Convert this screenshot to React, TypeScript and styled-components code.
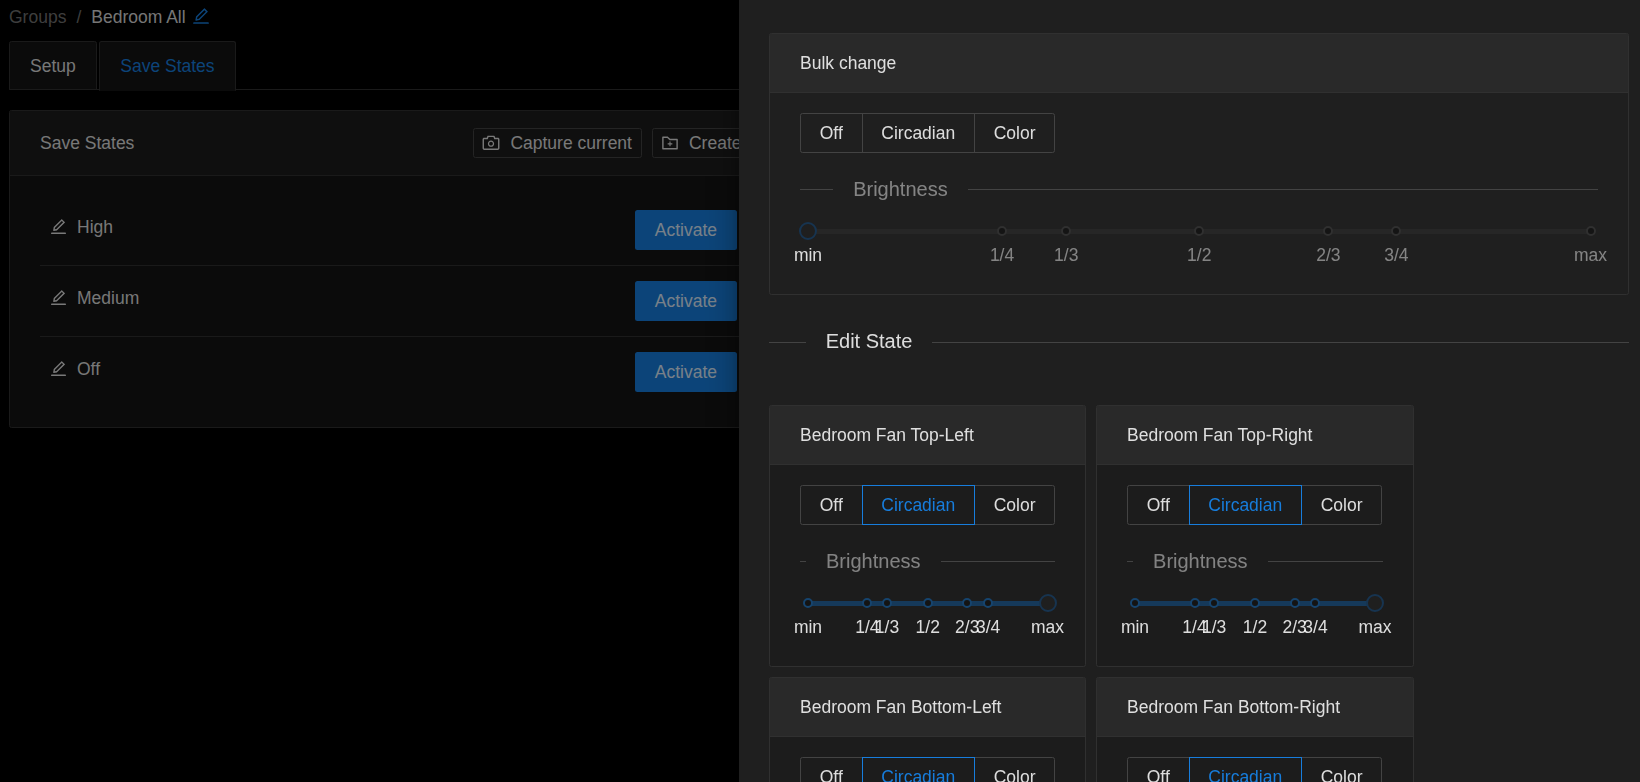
import React from "react";
import styled, { createGlobalStyle } from "styled-components";
import { AiOutlineEdit, AiOutlineCamera, AiOutlineFolderAdd } from "react-icons/ai";

const Global = createGlobalStyle`
  * { box-sizing: border-box; }
  html, body { margin: 0; height: 100%; overflow: hidden; background: #000; }
  body { font-family: "Liberation Sans", Arial, sans-serif; font-size: 17.5px; line-height: 27.5px; color: rgba(255,255,255,.85); }
`;

const Page = styled.main`
  height: 782px;
  padding: 4px 9px 0;
  overflow: hidden;
`;
const Crumbs = styled.nav`
  display: flex;
  align-items: center;
  height: 27.5px;
  color: rgba(255,255,255,.45);
`;
const Slash = styled.span`
  margin: 0 10px;
`;
const Current = styled.span`
  color: rgba(255,255,255,.85);
`;
const EditLink = styled.span`
  display: inline-flex;
  margin-left: 5px;
  margin-top: -3px;
  color: #177ddc;
  font-size: 20px;
`;
const TabBar = styled.div`
  display: flex;
  gap: 2.5px;
  height: 49px;
  margin-top: 9.5px;
  border-bottom: 1px solid #303030;
`;
const Tab = styled.div<{ $active?: boolean }>`
  padding: 10.5px 20px 0;
  height: ${(p) => (p.$active ? "50px" : "49px")};
  background: #141414;
  border: 1px solid #303030;
  border-bottom-color: ${(p) => (p.$active ? "#141414" : "#303030")};
  border-radius: 2.5px 2.5px 0 0;
  color: ${(p) => (p.$active ? "#177ddc" : "rgba(255,255,255,.85)")};
`;
const StatesCard = styled.section`
  width: 773.5px;
  margin-top: 20px;
  background: #141414;
  border: 1px solid #303030;
  border-radius: 2.5px;
`;
const StatesHead = styled.header`
  display: flex;
  align-items: center;
  justify-content: space-between;
  height: 64.5px;
  padding: 0 30px;
  background: #1d1d1d;
  border-bottom: 1px solid #303030;
`;
const StatesTitle = styled.span`
  padding-top: 2px;
`;
const HeadActions = styled.div`
  display: flex;
  gap: 10px;
`;
const SmallButton = styled.div`
  display: flex;
  align-items: center;
  gap: 9px;
  height: 30px;
  padding: 1px 9px 0 7px;
  border: 1px solid #434343;
  border-radius: 2.5px;
  white-space: nowrap;
  svg { font-size: 20px; margin-top: -1px; }
`;
const StatesBody = styled.div`
  padding: 19.5px 30px 20px;
`;
const StateRow = styled.div`
  display: flex;
  justify-content: space-between;
  padding: 15px 14.5px 15px 8.5px;
  & + & { border-top: 1px solid #303030; }
`;
const StateName = styled.div`
  display: flex;
  align-items: center;
  gap: 9.5px;
  height: 27.5px;
  margin-top: 4px;
  svg { font-size: 19px; margin-top: -2px; }
`;
const Primary = styled.div`
  height: 40px;
  padding: 1px 20px 0;
  display: flex;
  align-items: center;
  background: #177ddc;
  border-radius: 2.5px;
  color: rgba(255,255,255,.85);
`;

const Mask = styled.div`
  position: fixed;
  inset: 0;
  background: rgba(0,0,0,.45);
`;
const Drawer = styled.aside`
  position: fixed;
  top: 0;
  right: 0;
  width: 901px;
  height: 782px;
  padding: 33px 11px 0 30px;
  overflow: hidden;
  background: #1f1f1f;
  box-shadow: -6px 0 16px -8px rgba(0,0,0,.32), -9px 0 28px 0 rgba(0,0,0,.2);
`;
const Card = styled.section<{ $inset?: boolean }>`
  border: 1px solid #303030;
  border-radius: 2.5px;
  background: ${(p) => (p.$inset ? "#1c1c1c" : "#1f1f1f")};
`;
const CardHead = styled.header`
  height: 59px;
  padding: 2px 30px 0;
  display: flex;
  align-items: center;
  background: #292929;
  border-bottom: 1px solid #303030;
`;
const CardBody = styled.div`
  padding: 20px 30px 20px;
`;
const RadioGroup = styled.div`
  display: inline-flex;
  vertical-align: top;
`;
const RadioButton = styled.div<{ $on?: boolean }>`
  position: relative;
  height: 40px;
  padding: 0 18.75px;
  line-height: 38px;
  border: 1px solid ${(p) => (p.$on ? "#177ddc" : "#434343")};
  color: ${(p) => (p.$on ? "#177ddc" : "rgba(255,255,255,.85)")};
  z-index: ${(p) => (p.$on ? 1 : 0)};
  & + & { margin-left: -1px; }
  &:first-child { border-radius: 2.5px 0 0 2.5px; }
  &:last-child { border-radius: 0 2.5px 2.5px 0; }
`;
const Divider = styled.div<{ $bright?: boolean; $flush?: boolean }>`
  display: flex;
  align-items: center;
  font-size: 20px;
  line-height: 31.4px;
  margin: ${(p) => (p.$flush ? "31.5px 0 47px" : "21px 0 19.5px")};
  color: ${(p) => (p.$bright ? "rgba(255,255,255,.85)" : "rgba(255,255,255,.45)")};
  &::before, &::after {
    content: "";
    height: 1px;
    background: #434343;
  }
  &::before { flex: 5 1 0; }
  &::after { flex: 95 1 0; }
`;
const DividerText = styled.span`
  padding: 0 20px;
  white-space: nowrap;
`;
const SliderRoot = styled.div`
  position: relative;
  height: 49px;
  margin: 0 7.5px 0 8px;
`;
const Rail = styled.div`
  position: absolute;
  top: 4px;
  left: 0;
  right: 0;
  height: 5px;
  background: #262626;
`;
const Fill = styled.div`
  position: absolute;
  top: 4px;
  left: 0;
  height: 5px;
  background: #15395a;
`;
const Dot = styled.span<{ $on?: boolean }>`
  position: absolute;
  top: 1.5px;
  width: 10px;
  height: 10px;
  margin-left: -5px;
  border-radius: 50%;
  background: #141414;
  border: 2.5px solid ${(p) => (p.$on ? "#16446e" : "#303030")};
`;
const Handle = styled.span`
  position: absolute;
  top: -2.5px;
  width: 18px;
  height: 18px;
  margin-left: -9px;
  border-radius: 50%;
  background: #1f1f1f;
  border: 2.5px solid #173450;
`;
const Mark = styled.span<{ $on?: boolean }>`
  position: absolute;
  top: 17.5px;
  transform: translateX(-50%);
  white-space: nowrap;
  color: ${(p) => (p.$on ? "rgba(255,255,255,.85)" : "rgba(255,255,255,.45)")};
`;
const FanGrid = styled.div`
  display: grid;
  grid-template-columns: 317px 317.5px;
  column-gap: 10px;
  row-gap: 10.5px;
`;

const marks: [string, number][] = [
  ["min", 0],
  ["1/4", 24.8],
  ["1/3", 33],
  ["1/2", 50],
  ["2/3", 66.5],
  ["3/4", 75.2],
  ["max", 100],
];

function Slider({ value }: { value: number }) {
  return (
    <SliderRoot>
      <Rail />
      <Fill style={{ width: `${value}%` }} />
      {marks.map(([label, at]) =>
        at === value ? null : <Dot key={label} $on={at <= value} style={{ left: `${at}%` }} />
      )}
      <Handle style={{ left: `${value}%` }} />
      {marks.map(([label, at]) => (
        <Mark key={label} $on={at <= value} style={{ left: `${at}%` }}>
          {label}
        </Mark>
      ))}
    </SliderRoot>
  );
}

function ModeCard({ title, value, mode }: { title: string; value: number; mode?: string }) {
  return (
    <Card $inset={!!mode}>
      <CardHead>{title}</CardHead>
      <CardBody>
        <RadioGroup>
          {["Off", "Circadian", "Color"].map((m) => (
            <RadioButton key={m} $on={m === mode}>
              {m}
            </RadioButton>
          ))}
        </RadioGroup>
        <Divider>
          <DividerText>Brightness</DividerText>
        </Divider>
        <Slider value={value} />
      </CardBody>
    </Card>
  );
}

export default function App() {
  return (
    <>
      <Global />
      <Page>
        <Crumbs>
          Groups
          <Slash>/</Slash>
          <Current>Bedroom All</Current>
          <EditLink>
            <AiOutlineEdit />
          </EditLink>
        </Crumbs>
        <TabBar>
          <Tab>Setup</Tab>
          <Tab $active>Save States</Tab>
        </TabBar>
        <StatesCard>
          <StatesHead>
            <StatesTitle>Save States</StatesTitle>
            <HeadActions>
              <SmallButton>
                <AiOutlineCamera />
                Capture current
              </SmallButton>
              <SmallButton>
                <AiOutlineFolderAdd />
                Create
              </SmallButton>
            </HeadActions>
          </StatesHead>
          <StatesBody>
            {["High", "Medium", "Off"].map((name) => (
              <StateRow key={name}>
                <StateName>
                  <AiOutlineEdit />
                  {name}
                </StateName>
                <Primary>Activate</Primary>
              </StateRow>
            ))}
          </StatesBody>
        </StatesCard>
      </Page>
      <Mask />
      <Drawer>
        <ModeCard title="Bulk change" value={0} />
        <Divider $bright $flush>
          <DividerText>Edit State</DividerText>
        </Divider>
        <FanGrid>
          <ModeCard title="Bedroom Fan Top-Left" value={100} mode="Circadian" />
          <ModeCard title="Bedroom Fan Top-Right" value={100} mode="Circadian" />
          <ModeCard title="Bedroom Fan Bottom-Left" value={100} mode="Circadian" />
          <ModeCard title="Bedroom Fan Bottom-Right" value={100} mode="Circadian" />
        </FanGrid>
      </Drawer>
    </>
  );
}
